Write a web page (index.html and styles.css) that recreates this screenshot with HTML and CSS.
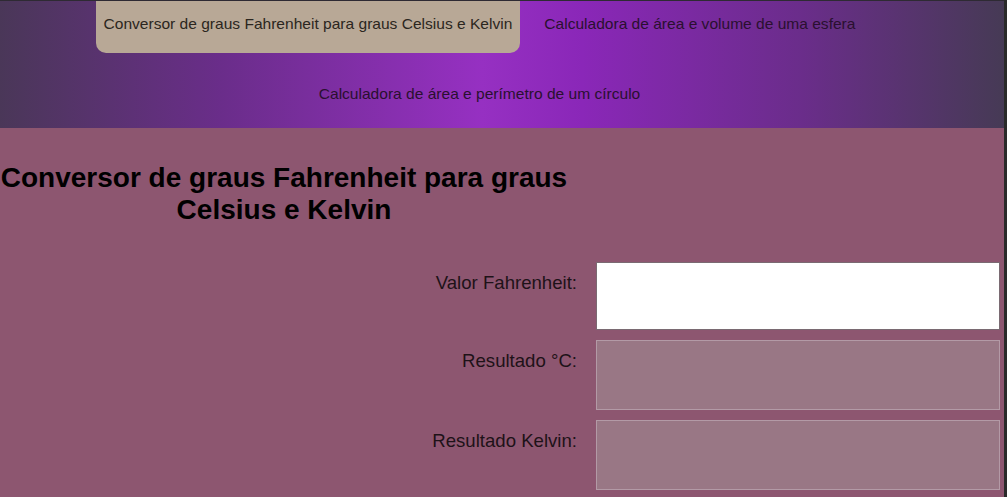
FILE: index.html
```html
<!DOCTYPE html>
<html lang="pt-BR">
<head>
<meta charset="utf-8">
<title>Conversor de graus</title>
<link rel="stylesheet" href="styles.css">
</head>
<body>
<div class="page">
  <header class="header">
    <nav class="nav">
      <a class="nav-item active" href="#">Conversor de graus Fahrenheit para graus Celsius e Kelvin</a>
      <a class="nav-item" href="#">Calculadora de área e volume de uma esfera</a>
      <a class="nav-item" href="#">Calculadora de área e perímetro de um círculo</a>
    </nav>
  </header>
  <main class="main">
    <h1 class="title">Conversor de graus Fahrenheit para graus Celsius e Kelvin</h1>
    <form class="form">
      <label class="label" for="f">Valor Fahrenheit:</label>
      <input class="field" id="f" type="text">
      <label class="label" for="c">Resultado °C:</label>
      <input class="field readonly" id="c" type="text" disabled>
      <label class="label" for="k">Resultado Kelvin:</label>
      <input class="field readonly" id="k" type="text" disabled>
    </form>
  </main>
</div>
</body>
</html>
```
FILE: styles.css
```css
html, body {
  margin: 0;
  padding: 0;
  background: #2a2a2a;
}
body {
  font-family: "Liberation Sans", Arial, sans-serif;
  width: 1007px;
  height: 497px;
  overflow: hidden;
}
.page {
  width: 1004px;
  height: 497px;
  background: #8d5670;
  border-top: 1px solid #2e2a33;
  box-sizing: border-box;
}
.header {
  height: 127px;
  background: linear-gradient(to right, #4a3758 0%, #6a2d8a 22%, #9630c2 48%, #8a27b8 58%, #6a2d8a 80%, #463a55 100%);
}
.nav {
  width: 959px;
  display: flex;
  flex-wrap: wrap;
  justify-content: center;
  column-gap: 16px;
  row-gap: 18px;
}
.nav-item {
  display: block;
  padding: 14px 8px 20px;
  font-size: 15.55px;
  line-height: 18px;
  color: #2a1030;
  text-decoration: none;
  border-radius: 0 0 10px 10px;
}
.nav-item.active {
  background: #b8a896;
  color: #2b2620;
}
.main {
  padding-top: 34px;
}
.title {
  width: 568px;
  margin: 0;
  text-align: center;
  font-size: 28px;
  font-weight: bold;
  color: #000;
}
.form {
  display: grid;
  grid-template-columns: 577px 404px;
  column-gap: 19px;
  row-gap: 10px;
  margin-top: 36px;
}
.label {
  text-align: right;
  font-size: 18.6px;
  color: #1e1218;
  padding-top: 10px;
}
.field {
  height: 68px;
  margin: 0;
  box-sizing: border-box;
  border: 1px solid #7a6a72;
  background: #fff;
  font-size: 18px;
}
.field.readonly {
  height: 70px;
  border: 1px solid #b39aa6;
  background: #997785;
}
```
